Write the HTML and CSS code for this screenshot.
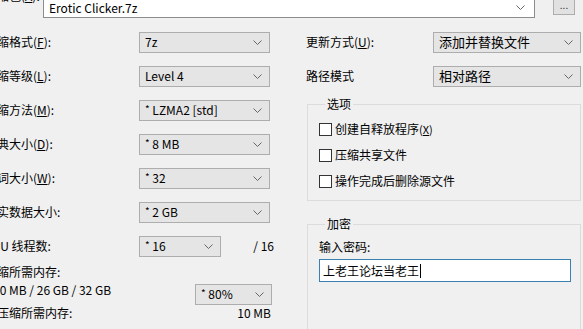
FILE: index.html
```html
<!DOCTYPE html>
<html lang="zh-CN">
<head>
    <meta charset="UTF-8">
    <title>添加到压缩包</title>
    <link rel="stylesheet" href="styles.css">
</head>
<body>
<div class="dlg">
    <div class="top">
        <span class="toplbl">压缩包(<u>A</u>):</span>
        <div class="combo name">Erotic Clicker.7z<svg width="9" height="5"><polyline points="0.5,0.5 4.5,4.5 8.5,0.5"/></svg></div>
        <button class="dots">...</button>
    </div>

    <div class="main">
        <div class="left">
            <div class="row"><span class="lbl">压缩格式(<u>F</u>):</span><div class="combo">7z<svg width="9" height="5"><polyline points="0.5,0.5 4.5,4.5 8.5,0.5"/></svg></div></div>
            <div class="row"><span class="lbl">压缩等级(<u>L</u>):</span><div class="combo">Level 4<svg width="9" height="5"><polyline points="0.5,0.5 4.5,4.5 8.5,0.5"/></svg></div></div>
            <div class="row"><span class="lbl">压缩方法(<u>M</u>):</span><div class="combo"><span><i>*</i> LZMA2 [std]</span><svg width="9" height="5"><polyline points="0.5,0.5 4.5,4.5 8.5,0.5"/></svg></div></div>
            <div class="row"><span class="lbl">字典大小(<u>D</u>):</span><div class="combo"><span><i>*</i> 8 MB</span><svg width="9" height="5"><polyline points="0.5,0.5 4.5,4.5 8.5,0.5"/></svg></div></div>
            <div class="row"><span class="lbl">单词大小(<u>W</u>):</span><div class="combo"><span><i>*</i> 32</span><svg width="9" height="5"><polyline points="0.5,0.5 4.5,4.5 8.5,0.5"/></svg></div></div>
            <div class="row"><span class="lbl">固实数据大小:</span><div class="combo"><span><i>*</i> 2 GB</span><svg width="9" height="5"><polyline points="0.5,0.5 4.5,4.5 8.5,0.5"/></svg></div></div>
            <div class="row"><span class="lbl">CPU 线程数:</span><div class="combo small"><span><i>*</i> 16</span><svg width="9" height="5"><polyline points="0.5,0.5 4.5,4.5 8.5,0.5"/></svg></div><span class="val">/ 16</span></div>
            <div class="row mem">
                <div class="lbl2">
                    <div>压缩所需内存:</div>
                    <div class="memval">20 MB / 26 GB / 32 GB</div>
                </div>
                <div class="combo pct"><span><i>*</i> 80%</span><svg width="9" height="5"><polyline points="0.5,0.5 4.5,4.5 8.5,0.5"/></svg></div>
            </div>
            <div class="row last"><span class="lbl">解压缩所需内存:</span><span class="val">10 MB</span></div>
        </div>

        <div class="right">
            <div class="row"><span class="lbl rl">更新方式(<u>U</u>):</span><div class="combo wide">添加并替换文件<svg width="9" height="5"><polyline points="0.5,0.5 4.5,4.5 8.5,0.5"/></svg></div></div>
            <div class="row"><span class="lbl rl">路径模式</span><div class="combo wide">相对路径<svg width="9" height="5"><polyline points="0.5,0.5 4.5,4.5 8.5,0.5"/></svg></div></div>

            <fieldset class="group opts">
                <legend>选项</legend>
                <label class="chk"><span class="box"></span>创建自释放程序<small>(<u>X</u>)</small></label>
                <label class="chk"><span class="box"></span>压缩共享文件</label>
                <label class="chk"><span class="box"></span>操作完成后删除源文件</label>
            </fieldset>

            <fieldset class="group enc">
                <legend>加密</legend>
                <div class="pwlbl">输入密码:</div>
                <div class="pw">上老王论坛当老王<span class="caret"></span></div>
            </fieldset>
        </div>
    </div>
</div>
</body>
</html>
```

FILE: styles.css
```css
* {box-sizing: border-box;}
body {margin:0; background:#f0f0f0; overflow:hidden; font:12px/16px "Noto Sans CJK SC", sans-serif; color:#000;}
u {text-decoration:underline; text-underline-offset:1px;}
i {font-style:normal; font-size:10px; position:relative; top:-2px;}

.dlg {margin:0 0 0 -15px; width:640px;}

/* 顶部 */
.top {display:flex; align-items:flex-start; margin-top:-5px; height:23px;}
.top .toplbl {width:58px; flex:none; margin-top:-7px; white-space:nowrap;}
.combo {height:21px; border:1px solid #adadad; background:#e5e5e5; display:flex; align-items:center; justify-content:space-between; padding:0 7px 0 5px; white-space:nowrap; flex:none;}
.combo svg {flex:none;}
.combo polyline {fill:none; stroke:#666; stroke-width:1;}
.top .combo.name {width:492px; margin-top:2px; background:#fff; border-color:#8c8c8c; padding-right:9px;}
.dots {width:22px; height:20px; margin-left:18px; padding:0; border:1px solid #adadad; background:#e1e1e1; font:10px/10px "Noto Sans CJK SC", sans-serif; color:#333; flex:none;}

/* 本体 */
.main {display:flex; gap:34px; margin-top:7px;}
.left {width:287px; flex:none;}
.right {width:280px; flex:none;}

.row {display:flex; align-items:center; height:34px;}
.lbl {width:154px; flex:none; white-space:nowrap;}
.combo {width:131px;}
.combo.small {width:82px;}
.val {margin-left:auto; margin-right:-2px;}

.row.mem {height:42px; align-items:flex-end; justify-content:space-between;}
.lbl2 {line-height:18px; align-self:flex-start; white-space:nowrap;}
.memval {padding-left:8px;}
.combo.pct {width:77px;}
.row.last {height:16px;}
.row.last .val {margin-right:1px;}

.lbl.rl {width:127px;}
.combo.wide {width:148px; font-size:13px;}

/* 分组 */
.group {margin:3px 0 0 1px; width:274px; border:1px solid #dcdcdc; padding:4px 0 6px 11px;}
.group legend {padding:0 2px; margin-left:6px; line-height:16px;}
.chk {display:flex; align-items:center; height:26px; white-space:nowrap;}
.chk small {font-size:11px;}
.box {width:13px; height:13px; border:1px solid #333; background:#fff; margin-right:3px; flex:none;}

.group.enc {margin-top:15px; height:140px; padding:7px 0 0 11px;}
.pwlbl {line-height:16px;}
.pw {margin-top:4px; width:252px; height:23px; border:1px solid #3c7fb1; background:#fff; padding:0 3px; display:flex; align-items:center; font-size:12px;}
.caret {display:inline-block; width:1px; height:14px; background:#000; margin-left:1px;}
```
